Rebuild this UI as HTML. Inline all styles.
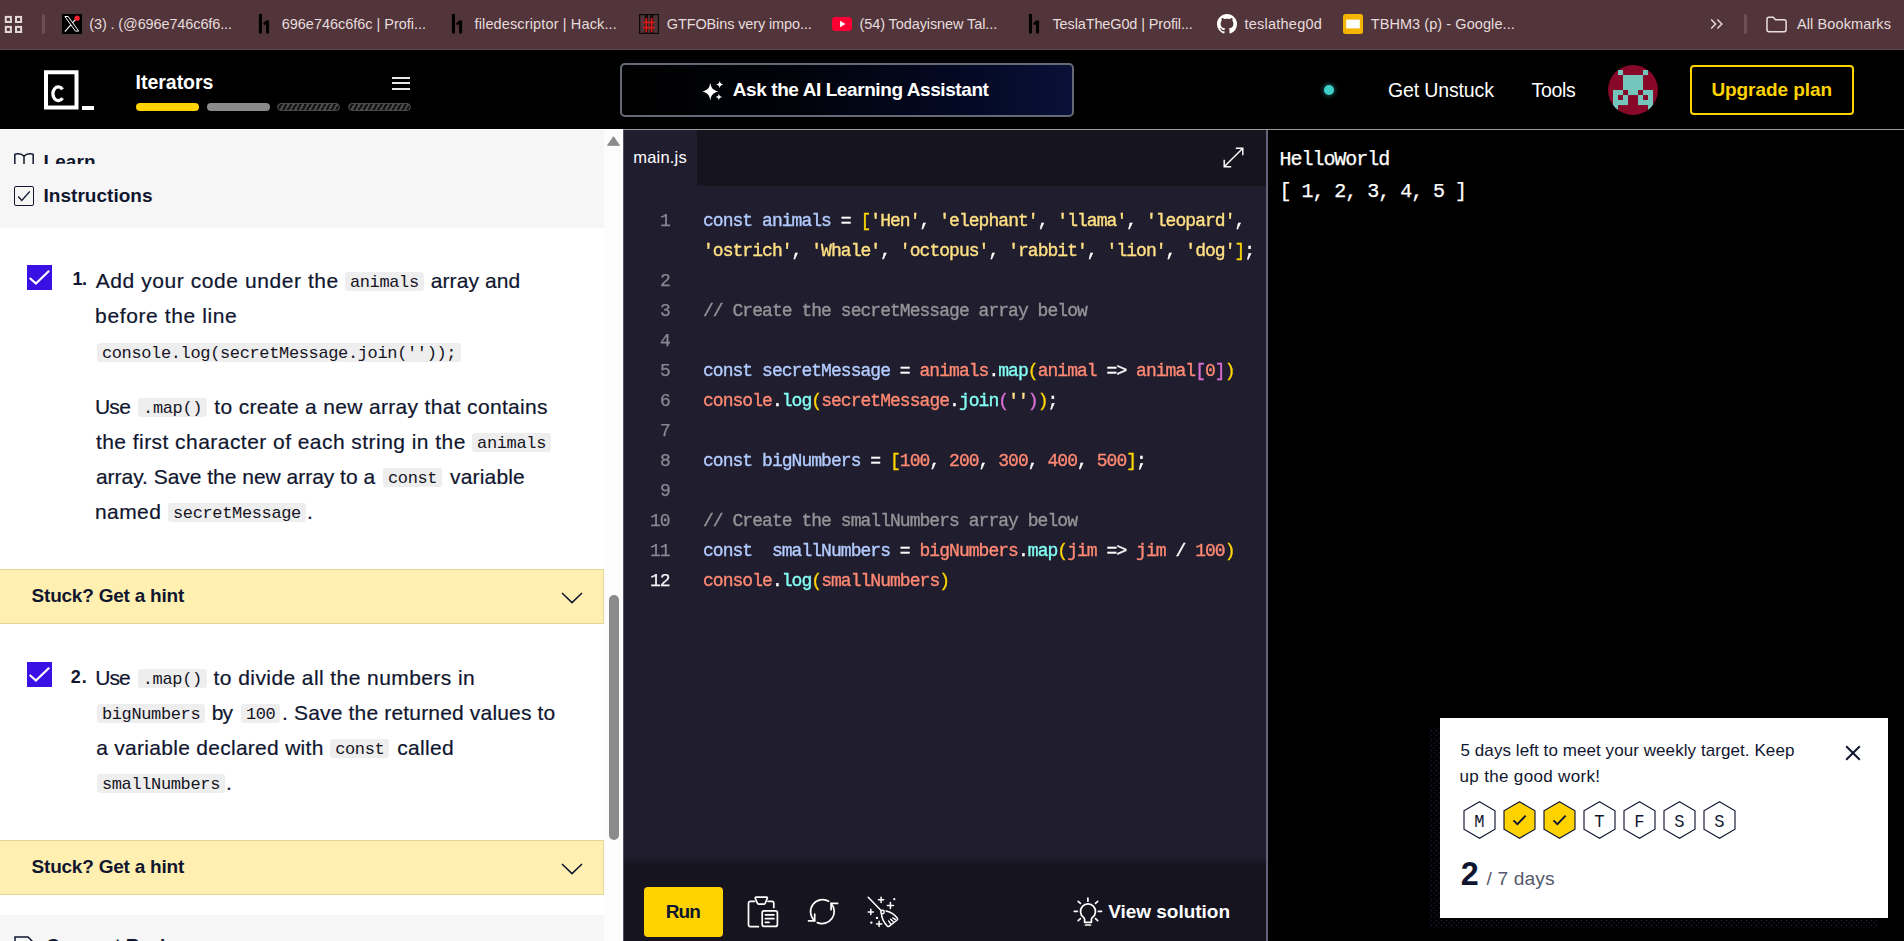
<!DOCTYPE html>
<html lang="en">
<head>
<meta charset="utf-8">
<title>Iterators | Codecademy</title>
<style>
*{box-sizing:border-box;margin:0;padding:0}
html,body{width:1904px;height:941px;overflow:hidden;background:#000;font-family:"Liberation Sans",sans-serif;}
body{position:relative}
.abs{position:absolute}
.nw{white-space:nowrap}
/* ---------- bookmarks bar ---------- */
#bm{position:absolute;left:0;top:0;width:1904px;height:50px;background:#52353a;border-bottom:1px solid #5d474b;color:#e6dcdd;font-size:14.5px}
#bm .t{position:absolute;top:13.5px;line-height:20px;white-space:nowrap;letter-spacing:-0.15px}
#bm svg{position:absolute}
/* ---------- header ---------- */
#hd{position:absolute;left:0;top:50px;width:1904px;height:80px;background:#000;border-bottom:1px solid #9b9b9b}
.hat{border:1px solid #4a4a4a;background:repeating-linear-gradient(120deg,#4a4a4a 0 2px,#141414 2px 4.2px)}
/* ---------- left panel ---------- */
#lp{position:absolute;left:0;top:130px;width:604px;height:811px;background:#fff;overflow:hidden;color:#10162f}

#lp .ln{position:absolute;left:0;width:604px;height:35px;line-height:35px;font-size:21px;white-space:nowrap;color:#10162f}
#lp .ln span{position:absolute;top:0;letter-spacing:0.5px;-webkit-text-stroke:0.2px}
#lp code{display:inline-block;font-family:"Liberation Mono",monospace;font-size:17px;letter-spacing:-0.36px;background:#eeeeee;border-radius:3px;padding:0 4.9px;height:18.5px;line-height:22.8px;color:#15141f;position:absolute;top:9px}
#lp .num{position:absolute;white-space:nowrap;font-weight:700;font-size:18px;line-height:35px;margin-top:-1px}
#lp .cb{position:absolute;left:27px;width:25px;height:25px;background:#3a10e5}
#lp .hint{position:absolute;left:0;width:604px;height:55px;background:#fff0b1;border:1px solid #e3d698;border-left:none}
#lp .hint span{position:absolute;left:31px;top:14px;font-weight:700;font-size:19px;line-height:24px;letter-spacing:-0.45px;white-space:nowrap}
#sb{position:absolute;left:604px;top:130px;width:19px;height:811px;background:linear-gradient(90deg,#fcfcfc 18px,#fff 18px)}
/* ---------- editor ---------- */
#ed{position:absolute;left:623px;top:130px;width:643px;height:811px;background:#201d2e;overflow:hidden;border-left:1px solid #505268}

#ed .tabbar{position:absolute;left:0;top:0;width:643px;height:56px;background:#16141f}
#ed .tab{position:absolute;left:0;top:0;width:73px;height:56px;background:#201d2e}
#ed .ln{position:absolute;right:596.5px;font-family:"Liberation Mono",monospace;font-size:18px;letter-spacing:-0.96px;line-height:30px;height:30px;color:#8a8993;white-space:pre;-webkit-text-stroke:0.25px;will-change:transform}
#ed .cl{position:absolute;left:78.6px;font-family:"Liberation Mono",monospace;font-size:18px;letter-spacing:-0.96px;line-height:30px;height:30px;color:#fff;white-space:pre;-webkit-text-stroke:0.35px;will-change:transform}
.k{color:#b3ccff}.s{color:#ffe083}.g{color:#ffd700}.v{color:#ff8973}.f{color:#83fff5}.o{color:#da70d6}.c{color:#939598}
#ed .foot{position:absolute;left:0;top:734px;width:643px;height:77px;background:#16141f}
#ed .fsh{position:absolute;left:0;top:726px;width:643px;height:8px;background:linear-gradient(180deg,rgba(22,20,31,0) 0%,rgba(22,20,31,.8) 100%)}
#dv{position:absolute;left:1266px;top:130px;width:2px;height:811px;background:#62657a}
/* ---------- terminal ---------- */
#tm{position:absolute;left:1268px;top:130px;width:636px;height:811px;background:#000;overflow:hidden}
#tm .tl{position:absolute;left:11.5px;font-family:"Liberation Mono",monospace;font-size:20px;letter-spacing:-1.03px;line-height:32px;color:#fff;white-space:pre;-webkit-text-stroke:0.25px}
/* ---------- popup ---------- */
#ppsh{position:absolute;left:1429px;top:728px;width:448px;height:200px;background-image:radial-gradient(circle,#1c2346 0.65px,transparent 1.05px),radial-gradient(circle,#1c2346 0.65px,transparent 1.05px);background-size:5px 5px;background-position:0 0,2.5px 2.5px}
#pp{position:absolute;left:1440px;top:718px;width:448px;height:200px;background:#fff;color:#10162f}
</style>
</head>
<body>
<div id="bm">
<!-- apps grid -->
<svg style="left:4px;top:15px" width="19" height="19" viewBox="0 0 19 19" fill="none" stroke="#e4d9da" stroke-width="2"><rect x="1.8" y="1.9" width="5.1" height="5.1"/><rect x="12" y="1.9" width="5.1" height="5.1"/><rect x="1.8" y="11.9" width="5.1" height="5.1"/><rect x="12" y="11.9" width="5.1" height="5.1"/></svg>
<div class="abs" style="left:42px;top:14px;width:2.5px;height:20px;background:#6b4f55;border-radius:1.2px"></div>
<!-- X favicon -->
<svg style="left:62px;top:14px" width="20" height="20" viewBox="0 0 20 20"><rect width="20" height="20" fill="#000"/><path d="M2.9 17.6L14 4.8" stroke="#fff" stroke-width="1.1" fill="none"/><path d="M2.9 2.5h3.3l10.5 14.6h-3.3z" fill="#000" stroke="#fff" stroke-width="1"/><circle cx="15.1" cy="4.3" r="2.7" fill="#f4212e"/></svg>
<span class="t" id="b1" style="left:89.25px;letter-spacing:-0.120px">(3) . (@696e746c6f6...</span>
<!-- h1 -->
<svg style="left:258px;top:14px" width="13" height="20" viewBox="0 0 13 20"><path d="M.9 0h3.1v18.7l-1.55 1.2L.9 18.7zM8 6.600000000000001h3.1v12.1l-1.55 1.2L8 18.7V10.2L6.1 11.3 5.1 9.5 8 6.600000000000001z" fill="#000"/></svg>
<span class="t" id="b2" style="left:281.75px;letter-spacing:-0.025px">696e746c6f6c | Profi...</span>
<svg style="left:451px;top:14px" width="13" height="20" viewBox="0 0 13 20"><path d="M.9 0h3.1v18.7l-1.55 1.2L.9 18.7zM8 6.600000000000001h3.1v12.1l-1.55 1.2L8 18.7V10.2L6.1 11.3 5.1 9.5 8 6.600000000000001z" fill="#000"/></svg>
<span class="t" id="b3" style="left:474.50px;letter-spacing:0.136px">filedescriptor | Hack...</span>
<!-- gtfobins -->
<svg style="left:639px;top:14px" width="20" height="20" viewBox="0 0 20 20"><rect x="0.6" y="0.6" width="18.8" height="18.8" fill="none" stroke="#0a0a0a" stroke-width="1.2"/><path d="M7.3 1v18M12.6 1v18" stroke="#1a0d0f" stroke-width="3.4" fill="none"/><path d="M7.3 4v14.2M12.6 4v14.2M4.2 8.3h11.4M4.2 13.6h11.4" stroke="#d61a1a" stroke-width="1.8" fill="none"/></svg>
<span class="t" id="b4" style="left:666.75px;letter-spacing:-0.121px">GTFOBins very impo...</span>
<!-- youtube -->
<svg style="left:832px;top:17px" width="20" height="14" viewBox="0 0 20 14"><rect width="20" height="14" rx="3.5" fill="#ff0033"/><path d="M8 3.8v6.4l5.4-3.2z" fill="#fff"/></svg>
<span class="t" id="b5" style="left:859.50px;letter-spacing:-0.093px">(54) Todayisnew Tal...</span>
<svg style="left:1028px;top:14px" width="13" height="20" viewBox="0 0 13 20"><path d="M.9 0h3.1v18.7l-1.55 1.2L.9 18.7zM8 6.600000000000001h3.1v12.1l-1.55 1.2L8 18.7V10.2L6.1 11.3 5.1 9.5 8 6.600000000000001z" fill="#000"/></svg>
<span class="t" id="b6" style="left:1052.50px;letter-spacing:-0.132px">TeslaTheG0d | Profil...</span>
<!-- github -->
<svg style="left:1217px;top:14px" width="20" height="20" viewBox="0 0 16 16"><path fill="#fff" d="M8 0C3.58 0 0 3.58 0 8c0 3.54 2.29 6.53 5.47 7.59.4.07.55-.17.55-.38 0-.19-.01-.82-.01-1.49-2.01.37-2.53-.49-2.69-.94-.09-.23-.48-.94-.82-1.13-.28-.15-.68-.52-.01-.53.63-.01 1.08.58 1.23.82.72 1.21 1.87.87 2.33.66.07-.52.28-.87.51-1.07-1.78-.2-3.64-.89-3.64-3.95 0-.87.31-1.59.82-2.15-.08-.2-.36-1.02.08-2.12 0 0 .67-.21 2.2.82.64-.18 1.32-.27 2-.27s1.36.09 2 .27c1.53-1.04 2.2-.82 2.2-.82.44 1.1.16 1.92.08 2.12.51.56.82 1.27.82 2.15 0 3.07-1.87 3.75-3.65 3.95.29.25.54.73.54 1.48 0 1.07-.01 1.93-.01 2.2 0 .21.15.46.55.38A8.01 8.01 0 0 0 16 8c0-4.42-3.58-8-8-8z"/></svg>
<span class="t" id="b7" style="left:1244.50px;letter-spacing:0.234px">teslatheg0d</span>
<!-- slides -->
<svg style="left:1343px;top:14px" width="20" height="20" viewBox="0 0 20 20"><rect width="20" height="20" rx="2.5" fill="#f4b400"/><rect x="3.2" y="5.6" width="13.6" height="8.8" fill="#fff"/></svg>
<span class="t" id="b8" style="left:1370.75px;letter-spacing:0.070px">TBHM3 (p) - Google...</span>
<!-- chevrons -->
<svg style="left:1710px;top:18px" width="14" height="12" viewBox="0 0 14 12" fill="none" stroke="#e4d9da" stroke-width="1.5"><path d="M1.2 1.4l4.4 4.5-4.4 4.5M7.4 1.4l4.4 4.5-4.4 4.5"/></svg>
<div class="abs" style="left:1744px;top:14px;width:2.5px;height:20px;background:#6b4f55;border-radius:1.2px"></div>
<!-- folder -->
<svg style="left:1766px;top:16px" width="21" height="17" viewBox="0 0 21 17" fill="none" stroke="#eadfe0" stroke-width="1.5"><path d="M1 3.2c0-1.1.8-1.9 1.9-1.9h4.3l2.4 2.4h8.600000000000001c1.1 0 1.9.8 1.9 1.9v8.2c0 1.1-.8 1.9-1.9 1.9H2.9c-1.1 0-1.9-.8-1.9-1.9z"/></svg>
<span class="t" id="b9" style="left:1796.90px;letter-spacing:0.115px">All Bookmarks</span>
</div>
<div id="hd">
<div class="abs" style="left:0;top:79px;width:623px;height:1px;background:#fdfdfd"></div>
<!-- logo -->

<div class="abs" style="left:82px;top:56px;width:12px;height:4px;background:#fff"></div>
<svg class="abs" style="left:44px;top:20px" width="36" height="40" viewBox="44 70 36 40" fill="none" stroke="#fff" stroke-width="3.3"><path d="M62.5 89.4A5.4 6.9 0 1 0 62.5 98.1"/><rect x="46" y="72.25" width="30.5" height="35.25" stroke-width="4"/></svg>
<span class="abs nw" id="h1t" style="left:135.50px;top:20px;font-size:19.5px;line-height:24px;font-weight:700;color:#fff;letter-spacing:-0.010px">Iterators</span>
<!-- hamburger -->
<div class="abs" style="left:392px;top:27px;width:18px;height:2px;background:#e8e8e8"></div>
<div class="abs" style="left:392px;top:32px;width:18px;height:2px;background:#e8e8e8"></div>
<div class="abs" style="left:392px;top:38px;width:18px;height:2px;background:#e8e8e8"></div>
<!-- progress -->
<div class="abs" style="left:136px;top:53px;width:63px;height:8px;border-radius:4px;background:#ffd300"></div>
<div class="abs" style="left:207px;top:53px;width:63px;height:8px;border-radius:4px;background:#8a8a8a"></div>
<div class="abs hat" style="left:277px;top:53px;width:63px;height:8px;border-radius:4px"></div>
<div class="abs hat" style="left:348px;top:53px;width:63px;height:8px;border-radius:4px"></div>
<!-- AI button -->
<div class="abs" style="left:620px;top:13px;width:454px;height:54px;border:2px solid #666a77;border-radius:5px;background:linear-gradient(90deg,#000 0%,#01030b 40%,#040a27 80%,#091138 100%)"></div>
<svg class="abs" style="left:702px;top:29.5px" width="23" height="22" viewBox="0 0 23 22" fill="#fff"><path d="M8.3 2.8C9.2 8.2 11 10.2 16.3 11.6C11 13 9.2 15 8.3 20.4C7.4 15 5.6 13 .3 11.6C5.6 10.2 7.4 8.2 8.3 2.8Z"/><path d="M17.7 .7c.4 2.4 1.2 3.300000000000001 3.6 3.8-2.4.5-3.2 1.4-3.6 3.8-.4-2.4-1.2-3.3-3.6-3.8 2.4-.5 3.2-1.4 3.6-3.8z"/><path d="M16.9 13.6c.4 2.2 1.1 3 3.3 3.5-2.2.5-2.9 1.3-3.3 3.5-.4-2.2-1.1-3-3.3-3.5 2.2-.5 2.9-1.3 3.3-3.5z"/></svg>
<span class="abs nw" id="ai" style="left:732.80px;top:28px;font-size:19px;line-height:24px;font-weight:700;color:#fff;letter-spacing:-0.418px">Ask the AI Learning Assistant</span>
<!-- dot -->
<div class="abs" style="left:1324px;top:35px;width:10px;height:10px;border-radius:50%;background:#3ecfc8;box-shadow:0 0 4px 1px rgba(62,207,200,.45)"></div>
<span class="abs nw" id="gu" style="left:1387.90px;top:28px;font-size:19.5px;line-height:24px;color:#fff;letter-spacing:-0.124px">Get Unstuck</span>
<span class="abs nw" id="tl" style="left:1531.60px;top:28px;font-size:19.5px;line-height:24px;color:#fff;letter-spacing:-0.343px">Tools</span>
<svg class="abs" style="left:1608px;top:15px" width="50" height="50" viewBox="0 0 50 50"><defs><clipPath id="avc"><circle cx="25" cy="25" r="25"/></clipPath></defs><g clip-path="url(#avc)"><rect width="50" height="50" fill="#870828"/><g fill="#74c6bc"><rect x="10" y="5" width="5.05" height="5.05"/><rect x="35" y="5" width="5.05" height="5.05"/><rect x="15" y="10" width="5.05" height="5.05"/><rect x="20" y="10" width="5.05" height="5.05"/><rect x="25" y="10" width="5.05" height="5.05"/><rect x="30" y="10" width="5.05" height="5.05"/><rect x="15" y="15" width="5.05" height="5.05"/><rect x="20" y="15" width="5.05" height="5.05"/><rect x="25" y="15" width="5.05" height="5.05"/><rect x="30" y="15" width="5.05" height="5.05"/><rect x="15" y="20" width="5.05" height="5.05"/><rect x="20" y="20" width="5.05" height="5.05"/><rect x="25" y="20" width="5.05" height="5.05"/><rect x="30" y="20" width="5.05" height="5.05"/><rect x="5" y="25" width="5.05" height="5.05"/><rect x="10" y="25" width="5.05" height="5.05"/><rect x="20" y="25" width="5.05" height="5.05"/><rect x="25" y="25" width="5.05" height="5.05"/><rect x="35" y="25" width="5.05" height="5.05"/><rect x="40" y="25" width="5.05" height="5.05"/><rect x="5" y="30" width="5.05" height="5.05"/><rect x="15" y="30" width="5.05" height="5.05"/><rect x="30" y="30" width="5.05" height="5.05"/><rect x="40" y="30" width="5.05" height="5.05"/><rect x="5" y="35" width="5.05" height="5.05"/><rect x="10" y="35" width="5.05" height="5.05"/><rect x="15" y="35" width="5.05" height="5.05"/><rect x="30" y="35" width="5.05" height="5.05"/><rect x="35" y="35" width="5.05" height="5.05"/><rect x="40" y="35" width="5.05" height="5.05"/><rect x="5" y="40" width="5.05" height="5.05"/><rect x="40" y="40" width="5.05" height="5.05"/></g></g></svg>
<div class="abs" style="left:1690px;top:15px;width:164px;height:50px;border:2px solid #ffd300;border-radius:4px"></div>
<span class="abs nw" id="up" style="left:1711.40px;top:28px;font-size:19px;line-height:24px;font-weight:700;color:#ffd300;letter-spacing:-0.072px">Upgrade plan</span>
</div>
<div id="lp">
<!-- top gray header -->
<div class="abs" style="left:0;top:0;width:604px;height:98px;background:#f6f6f6"></div>
<div class="abs" style="left:0;top:0;width:604px;height:34px;overflow:hidden">
<svg class="abs" style="left:14px;top:23px" width="20" height="18" viewBox="0 0 20 18" fill="none" stroke="#10162f" stroke-width="1.5"><path d="M10 3.2C8.6 1.6 6.6.8 4.200000000000001.8 2.6.8 1.6 1 .8 1.4V16M10 3.2c1.4-1.6 3.4-2.4 5.800000000000001-2.4 1.6 0 2.6.2 3.4.6V16M10 3.2V16"/></svg>
<span class="abs nw" id="lrn" style="left:43.50px;top:20px;font-weight:700;font-size:19px;line-height:24px;letter-spacing:0.092px">Learn</span>
</div>
<div class="abs" style="left:14px;top:56px;width:20px;height:20px;border:1.5px solid #10162f;border-radius:2px"></div>
<svg class="abs" style="left:14px;top:56px" width="20" height="20" viewBox="0 0 20 20" fill="none" stroke="#10162f" stroke-width="1.4"><path d="M4.2 10.600000000000001l3.6 3.8 8-9"/></svg>
<span class="abs nw" id="ins" style="left:43.50px;top:54px;font-weight:700;font-size:19px;line-height:24px;letter-spacing:0.031px">Instructions</span>

<!-- step 1 -->
<div class="cb" style="top:135px"><svg width="25" height="25" viewBox="0 0 25 25" fill="none" stroke="#fff" stroke-width="2.2"><path d="M2.7 13L8.9 18.6 22.2 5.8"/></svg></div>
<span class="num" id="n1" style="left:72.40px;top:133px;letter-spacing:-0.411px">1.</span>
<div class="ln" style="top:133px"><span id="l1a" style="left:95.80px;letter-spacing:0.567px">Add your code under the</span><code style="left:345px">animals</code><span id="l1b" style="left:430.70px;letter-spacing:0.108px">array and</span></div>
<div class="ln" style="top:168px"><span id="l2" style="left:95.10px;letter-spacing:0.613px">before the line</span></div>
<div class="ln" style="top:204px"><code style="left:97px">console.log(secretMessage.join(''));</code></div>
<div class="ln" style="top:259px"><span id="l4a" style="left:94.90px;letter-spacing:-0.683px">Use</span><code style="left:138.2px">.map()</code><span id="l4b" style="left:214.30px;letter-spacing:0.327px">to create a new array that contains</span></div>
<div class="ln" style="top:294px"><span id="l5a" style="left:95.90px;letter-spacing:0.453px">the first character of each string in the</span><code style="left:472.2px">animals</code></div>
<div class="ln" style="top:329px"><span id="l6a" style="left:95.90px;letter-spacing:-0.020px">array. Save the new array to a</span><code style="left:383.1px">const</code><span id="l6b" style="left:450.00px;letter-spacing:0.177px">variable</span></div>
<div class="ln" style="top:364px"><span id="l7a" style="left:94.90px;letter-spacing:0.442px">named</span><code style="left:168.1px">secretMessage</code><span id="l7b" style="left:307px;letter-spacing:0.5px">.</span></div>

<div class="hint" style="top:439px"><span id="h1s" style="left:31.60px;letter-spacing:-0.226px">Stuck? Get a hint</span><svg class="abs" style="left:561px;top:22px" width="22" height="12" viewBox="0 0 22 12" fill="none" stroke="#10162f" stroke-width="1.5"><path d="M1 1l10 9.600000000000001L21 1"/></svg></div>

<!-- step 2 -->
<div class="cb" style="top:532px"><svg width="25" height="25" viewBox="0 0 25 25" fill="none" stroke="#fff" stroke-width="2.2"><path d="M2.7 13L8.9 18.6 22.2 5.8"/></svg></div>
<span class="num" id="n2" style="left:70.70px;top:531px;letter-spacing:0.989px">2.</span>
<div class="ln" style="top:530px"><span id="m1a" style="left:95.20px;letter-spacing:-0.933px">Use</span><code style="left:137.9px">.map()</code><span id="m1b" style="left:213.60px;letter-spacing:0.418px">to divide all the numbers in</span></div>
<div class="ln" style="top:565px"><code style="left:97px">bigNumbers</code><span id="m2a" style="left:211.80px;letter-spacing:-0.979px">by</span><code style="left:241px">100</code><span id="m2b" style="left:282.00px;letter-spacing:0.171px">. Save the returned values to</span></div>
<div class="ln" style="top:600px"><span id="m3a" style="left:96.20px;letter-spacing:0.285px">a variable declared with</span><code style="left:330.3px">const</code><span id="m3b" style="left:397.30px;letter-spacing:0.322px">called</span></div>
<div class="ln" style="top:635px"><code style="left:97px">smallNumbers</code><span id="m4b" style="left:226px;letter-spacing:0.5px">.</span></div>

<div class="hint" style="top:710px"><span id="h2s" style="left:31.60px;letter-spacing:-0.226px">Stuck? Get a hint</span><svg class="abs" style="left:561px;top:22px" width="22" height="12" viewBox="0 0 22 12" fill="none" stroke="#10162f" stroke-width="1.5"><path d="M1 1l10 9.600000000000001L21 1"/></svg></div>

<!-- bottom gray -->
<div class="abs" style="left:0;top:785px;width:604px;height:30px;background:#f6f6f6"></div>
<svg class="abs" style="left:14px;top:806px" width="20" height="20" viewBox="0 0 20 20" fill="none" stroke="#10162f" stroke-width="1.5"><path d="M1 1h13l4 4v14H1z"/></svg>
<span class="abs nw" style="left:46px;top:804px;font-weight:700;font-size:19px;line-height:24px;letter-spacing:-0.2px">Concept Review</span>
</div>
<div id="sb">
<svg class="abs" style="left:3px;top:6px" width="13" height="10" viewBox="0 0 13 10"><path d="M6.5 0.6L12.6 9.4H0.4z" fill="#8b8b8b" stroke="#8b8b8b" stroke-width="0.8" stroke-linejoin="round"/></svg>
<div class="abs" style="left:4.5px;top:465px;width:10.5px;height:245px;border-radius:5.5px;background:#8b8b8b"></div>
</div>
<div id="ed">
<div class="tabbar"></div><div class="tab"></div>
<span class="abs nw" id="mj" style="left:9.30px;top:15.4px;font-size:16.5px;line-height:24px;color:#fff;letter-spacing:0.181px">main.js</span>
<svg class="abs" style="left:598px;top:16px" width="23" height="23" viewBox="0 0 23 23" fill="none" stroke="#fff" stroke-width="1.4"><path d="M2.2 20.8L20.8 2.2M13.8 2.2h7v7M9.2 20.8h-7v-7"/></svg>
<div class="ln" style="top:76px">1</div><div class="cl" style="top:76px"><span class="k">const animals</span> = <span class="g">[</span><span class="s">'Hen'</span>, <span class="s">'elephant'</span>, <span class="s">'llama'</span>, <span class="s">'leopard'</span>,</div>
<div class="cl" style="top:106px"><span class="s">'ostrich'</span>, <span class="s">'Whale'</span>, <span class="s">'octopus'</span>, <span class="s">'rabbit'</span>, <span class="s">'lion'</span>, <span class="s">'dog'</span><span class="g">]</span>;</div>
<div class="ln" style="top:136px">2</div>
<div class="ln" style="top:166px">3</div><div class="cl" style="top:166px"><span class="c">// Create the secretMessage array below</span></div>
<div class="ln" style="top:196px">4</div>
<div class="ln" style="top:226px">5</div><div class="cl" style="top:226px"><span class="k">const secretMessage</span> = <span class="v">animals</span>.<span class="f">map</span><span class="g">(</span><span class="v">animal</span> =&gt; <span class="v">animal</span><span class="o">[</span><span class="v">0</span><span class="o">]</span><span class="g">)</span></div>
<div class="ln" style="top:256px">6</div><div class="cl" style="top:256px"><span class="v">console</span>.<span class="f">log</span><span class="g">(</span><span class="v">secretMessage</span>.<span class="f">join</span><span class="o">(</span><span class="s">''</span><span class="o">)</span><span class="g">)</span>;</div>
<div class="ln" style="top:286px">7</div>
<div class="ln" style="top:316px">8</div><div class="cl" style="top:316px"><span class="k">const bigNumbers</span> = <span class="g">[</span><span class="v">100</span>, <span class="v">200</span>, <span class="v">300</span>, <span class="v">400</span>, <span class="v">500</span><span class="g">]</span>;</div>
<div class="ln" style="top:346px">9</div>
<div class="ln" style="top:376px">10</div><div class="cl" style="top:376px"><span class="c">// Create the smallNumbers array below</span></div>
<div class="ln" style="top:406px">11</div><div class="cl" style="top:406px"><span class="k">const  smallNumbers</span> = <span class="v">bigNumbers</span>.<span class="f">map</span><span class="g">(</span><span class="v">jim</span> =&gt; <span class="v">jim</span> / <span class="v">100</span><span class="g">)</span></div>
<div class="ln" style="top:436px;color:#f4f4f7">12</div><div class="cl" style="top:436px"><span class="v">console</span>.<span class="f">log</span><span class="g">(</span><span class="v">smallNumbers</span><span class="g">)</span></div>

<div class="fsh"></div>
<div class="foot">
<div class="abs" style="left:20px;top:23px;width:79px;height:50px;border-radius:4px;background:#ffd300"></div>
<span class="abs nw" id="run" style="left:41.70px;top:36px;font-size:19px;line-height:24px;font-weight:700;color:#10162f;letter-spacing:-0.864px">Run</span>
<!-- clipboard -->
<svg class="abs" style="left:123px;top:31px" width="33" height="34" viewBox="747 895 33 34" fill="none" stroke="#fff" stroke-width="1.7" stroke-linejoin="round" stroke-linecap="round"><path d="M754.6 901.3H750.4a1.9 1.9 0 0 0-1.9 1.9V924.8a1.9 1.9 0 0 0 1.9 1.9H758.4M768 901.3H771.9a1.9 1.9 0 0 1 1.9 1.9V907.4"/><path d="M755.3 898.2l2.1 5.1c.2.5.6.8 1.100000000000001.8h5.600000000000001c.5 0 .9-.3 1.100000000000001-.8l2.1-5.1c.2-.5-.1-1-.7-1H756c-.6 0-.9.5-.7 1z"/><rect x="762.2" y="910.9" width="15.2" height="15.5" rx="2"/><path d="M765.4 914.8h8.5M765.4 918.7h8.5M765.4 922.3h3.7"/></svg>
<!-- refresh -->
<svg class="abs" style="left:183px;top:33px" width="33" height="30" viewBox="807 897 33 30" fill="none" stroke="#fff" stroke-width="1.7" stroke-linecap="round" stroke-linejoin="round"><path d="M828.7 901.2A12.1 12.1 0 0 0 814.6 920.7"/><path d="M831.2 903.5A12.1 12.1 0 0 1 817.3 922.6"/><path d="M808.5 920.8h6.2v-6.6"/><path d="M837.6 903.4h-6.5v6.3"/></svg>
<!-- broom -->
<svg class="abs" style="left:242px;top:31px" width="34" height="34" viewBox="866 895 34 34" fill="none" stroke="#fff" stroke-width="1.5" stroke-linecap="round" stroke-linejoin="round"><path d="M868.2 897.2L881.3 910.7"/><circle cx="882.5" cy="912" r="1.7"/><path d="M881.4 913.4c.2 4.4 2.2 8.8 5.9 12.700000000000001c.5.5 1.1.6 1.7.2l8.100000000000001-6.3c.6-.5.7-1.100000000000001.3-1.7c-3-4.1-6.9-6.300000000000001-11.3-7.300000000000001"/><path d="M890.5 923.7l-1.9-2.8M893.1 921.6l-2.5-2.3M895.6 919.6l-2.9-1.7" stroke-width="1.3"/><path d="M878.5 899.8h5.2M881.1 897.1999999999999v5.2M887.4 905.6h6M890.4 902.6v6M868.1999999999999 911.9h5.2M870.8 909.3v5.2M876.5 923.9h5.2M879.1 921.3v5.2" stroke-width="1.5"/><circle cx="894.3" cy="899.2" r="1.1" fill="#fff" stroke="none"/><circle cx="877" cy="917.9" r="1.2" fill="#fff" stroke="none"/><circle cx="871.3" cy="922.6" r="1.2" fill="#fff" stroke="none"/></svg>
<!-- bulb -->
<svg class="abs" style="left:448px;top:31px" width="32" height="32" viewBox="1072 895 32 32" fill="none" stroke="#fff" stroke-width="1.7" stroke-linecap="round" stroke-linejoin="round"><path d="M1084.6 922.3V919.6c0-.9-.4-1.6-1.1-2.2A7.5 7.5 0 1 1 1092.5 917.4c-.7.6-1.1 1.3-1.1 2.2V922.3Z"/><path d="M1085.5 925h5"/><path d="M1087.9 898.2v3M1074.3 911.3h3M1098.4 911.3h3.2M1078.2 901.4l2.2 2M1097.7 901.4l-2.2 2M1078.2 920.7l2.2-2M1097.7 920.7l-2.2-2"/></svg>
<span class="abs nw" id="vs" style="left:484.20px;top:36px;font-size:19px;line-height:24px;font-weight:700;color:#fff;letter-spacing:-0.025px">View solution</span>
</div>
</div>
<div id="dv"></div>
<div id="tm">
<div class="tl" id="t1" style="top:14px">HelloWorld</div>
<div class="tl" id="t2" style="top:46px">[ 1, 2, 3, 4, 5 ]</div>
</div>
<div id="ppsh"></div>
<div id="pp">
<span class="abs nw" id="p1" style="left:20.50px;top:20px;font-size:17px;line-height:26px;letter-spacing:0.073px">5 days left to meet your weekly target. Keep</span>
<span class="abs nw" id="p2" style="left:19.50px;top:45.7px;font-size:17px;line-height:26px;letter-spacing:0.336px">up the good work!</span>
<svg class="abs" style="left:405px;top:27px" width="16" height="16" viewBox="0 0 16 16" fill="none" stroke="#10162f" stroke-width="2"><path d="M1.2 1.2l13.6 13.6M14.8 1.2L1.2 14.8"/></svg>
<svg class="abs" style="left:22.9px;top:83px" width="33" height="38" viewBox="0 0 33 38"><path d="M16.5 .7L32 9.85V28.15L16.5 37.3 1 28.15V9.85z" fill="#fff" stroke="#10162f" stroke-width="1.15"/><text transform="translate(16.5 26) scale(0.9 1)" x="0" y="0" text-anchor="middle" font-family="Liberation Mono, monospace" font-size="19" fill="#10162f">M</text></svg>
<svg class="abs" style="left:62.9px;top:83px" width="33" height="38" viewBox="0 0 33 38"><path d="M16.5 .7L32 9.85V28.15L16.5 37.3 1 28.15V9.85z" fill="#ffd300" stroke="#10162f" stroke-width="1.15"/><path d="M10.4 19.4l4 3.7 8.2-8.4" fill="none" stroke="#10162f" stroke-width="1.9"/></svg>
<svg class="abs" style="left:102.9px;top:83px" width="33" height="38" viewBox="0 0 33 38"><path d="M16.5 .7L32 9.85V28.15L16.5 37.3 1 28.15V9.85z" fill="#ffd300" stroke="#10162f" stroke-width="1.15"/><path d="M10.4 19.4l4 3.7 8.2-8.4" fill="none" stroke="#10162f" stroke-width="1.9"/></svg>
<svg class="abs" style="left:142.9px;top:83px" width="33" height="38" viewBox="0 0 33 38"><path d="M16.5 .7L32 9.85V28.15L16.5 37.3 1 28.15V9.85z" fill="#fff" stroke="#10162f" stroke-width="1.15"/><text transform="translate(16.5 26) scale(0.9 1)" x="0" y="0" text-anchor="middle" font-family="Liberation Mono, monospace" font-size="19" fill="#10162f">T</text></svg>
<svg class="abs" style="left:182.9px;top:83px" width="33" height="38" viewBox="0 0 33 38"><path d="M16.5 .7L32 9.85V28.15L16.5 37.3 1 28.15V9.85z" fill="#fff" stroke="#10162f" stroke-width="1.15"/><text transform="translate(16.5 26) scale(0.9 1)" x="0" y="0" text-anchor="middle" font-family="Liberation Mono, monospace" font-size="19" fill="#10162f">F</text></svg>
<svg class="abs" style="left:222.9px;top:83px" width="33" height="38" viewBox="0 0 33 38"><path d="M16.5 .7L32 9.85V28.15L16.5 37.3 1 28.15V9.85z" fill="#fff" stroke="#10162f" stroke-width="1.15"/><text transform="translate(16.5 26) scale(0.9 1)" x="0" y="0" text-anchor="middle" font-family="Liberation Mono, monospace" font-size="19" fill="#10162f">S</text></svg>
<svg class="abs" style="left:262.9px;top:83px" width="33" height="38" viewBox="0 0 33 38"><path d="M16.5 .7L32 9.85V28.15L16.5 37.3 1 28.15V9.85z" fill="#fff" stroke="#10162f" stroke-width="1.15"/><text transform="translate(16.5 26) scale(0.9 1)" x="0" y="0" text-anchor="middle" font-family="Liberation Mono, monospace" font-size="19" fill="#10162f">S</text></svg>
<span class="abs nw" id="p3" style="left:20.80px;top:138px;font-size:32.3px;line-height:36px;font-weight:700;letter-spacing:0.000px">2</span>
<span class="abs nw" id="p4" style="left:46.60px;top:149px;font-size:19.2px;line-height:24px;color:#565a6c;letter-spacing:0.100px">/ 7 days</span>
</div>
</body>
</html>
